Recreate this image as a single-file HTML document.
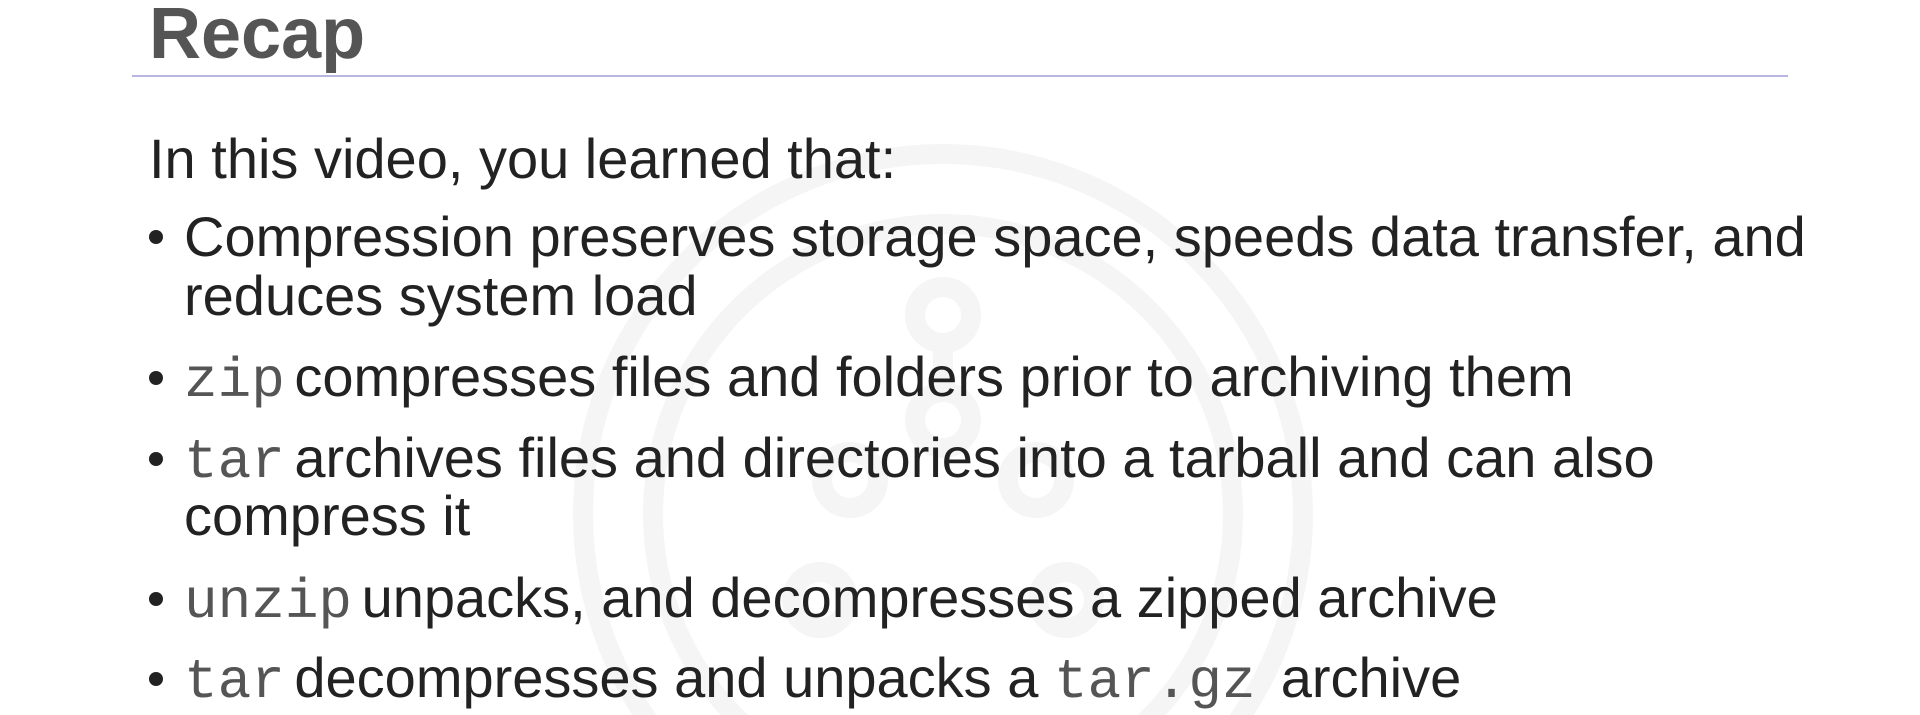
<!DOCTYPE html>
<html><head><meta charset="utf-8"><style>
html,body{margin:0;padding:0;background:#fff;width:1920px;height:715px;overflow:hidden;position:relative}
.t{position:absolute;left:149px;top:-2px;font:bold 72px/1 "Liberation Sans",sans-serif;color:#555}
.r{position:absolute;left:132px;top:75px;width:1656px;height:2px;background:#b9b6e3}
.l{position:absolute;font:56px/1 "Liberation Sans",sans-serif;color:#222;white-space:nowrap}
.b{position:absolute;left:149px;width:14px;height:14px;border-radius:50%;background:#222}
code{font-family:"Liberation Mono",monospace;color:#555;font-size:56px;margin-right:-6px}
#wrap{position:absolute;left:0;top:0;width:1920px;height:715px;overflow:hidden}
</style></head><body><div id="wrap">
<svg style="position:absolute;left:0;top:0" width="1920" height="715">
<g fill="none" stroke="#f5f5f5" stroke-width="20">
<circle cx="943" cy="514" r="360"/>
<circle cx="943" cy="514" r="290"/>
<circle cx="943" cy="315" r="28"/>
<circle cx="943" cy="420" r="28"/>
<circle cx="850" cy="480" r="28"/>
<circle cx="1036" cy="480" r="28"/>
<circle cx="820" cy="600" r="28"/>
<circle cx="1066" cy="600" r="28"/>
<line x1="943" y1="343" x2="943" y2="392"/>
</g></svg>
<div class="t">Recap</div>
<div class="r"></div>
<div class="l" style="left:149px;top:131px">In this video, you learned that:</div>
<div class="b" style="top:230px"></div>
<div class="l" style="left:184px;top:209px">Compression preserves storage space, speeds data transfer, and</div>
<div class="l" style="left:184px;top:268px">reduces system load</div>
<div class="b" style="top:371px"></div>
<div class="l" style="left:184px;top:349px"><code>zip</code> compresses files and folders prior to archiving them</div>
<div class="b" style="top:452px"></div>
<div class="l" style="left:184px;top:430px"><code>tar</code> archives files and directories into a tarball and can also</div>
<div class="l" style="left:184px;top:488px">compress it</div>
<div class="b" style="top:592px"></div>
<div class="l" style="left:184px;top:570px"><code>unzip</code> unpacks, and decompresses a zipped archive</div>
<div class="b" style="top:672px"></div>
<div class="l" style="left:184px;top:650px"><code>tar</code> decompresses and unpacks a <code>tar.gz</code>&nbsp; archive</div>
</div></body></html>
